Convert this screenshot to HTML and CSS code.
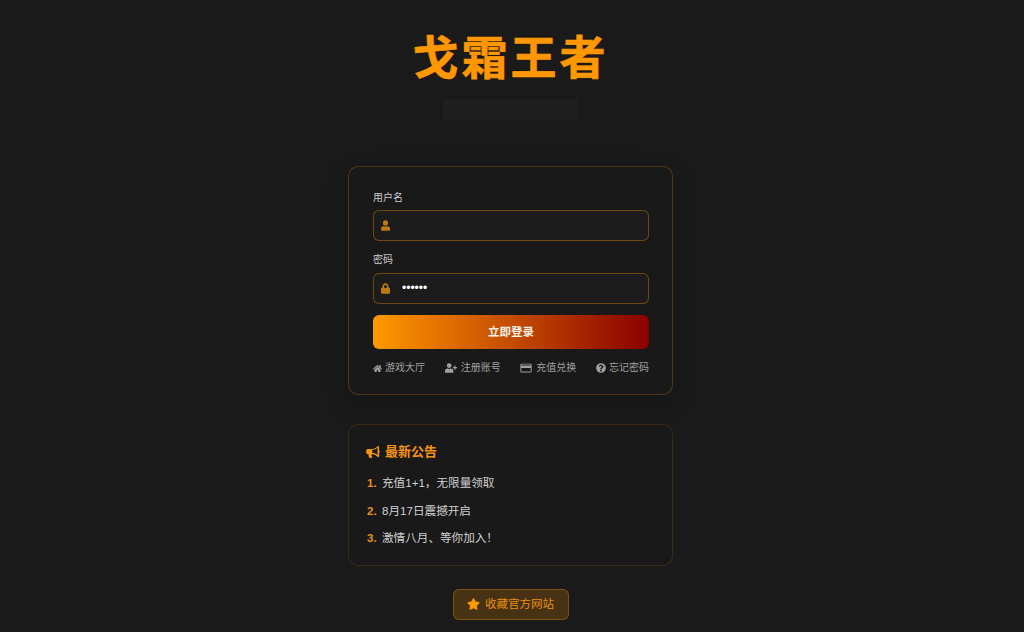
FILE: index.html
```html
<!DOCTYPE html>
<html lang="zh-CN">
<head>
<meta charset="utf-8">
<title>戈霜王者</title>
<link rel="stylesheet" href="styles.css">
</head>
<body>
<main class="page">
  <header class="header">
    <h1 class="title">戈霜王者</h1>
    <div class="subtitle"></div>
  </header>

  <form class="card login">
    <div class="label">用户名</div>
    <div class="field">
      <svg class="field-icon" viewBox="0 0 448 512"><path d="M224 256a128 128 0 1 0 0-256 128 128 0 0 0 0 256zm90 32h-17a174 174 0 0 1-146 0h-17A134 134 0 0 0 0 422v42a48 48 0 0 0 48 48h352a48 48 0 0 0 48-48v-42a134 134 0 0 0-134-134z"/></svg>
    </div>
    <div class="label label-second">密码</div>
    <div class="field">
      <svg class="field-icon" viewBox="0 0 448 512"><path d="M400 224h-24v-72C376 68 308 0 224 0S72 68 72 152v72H48a48 48 0 0 0-48 48v192a48 48 0 0 0 48 48h352a48 48 0 0 0 48-48V272a48 48 0 0 0-48-48zm-104 0H152v-72a72 72 0 0 1 144 0v72z"/></svg>
      <span class="dots">••••••</span>
    </div>
    <button class="submit" type="button">立即登录</button>
    <nav class="links">
      <a class="link"><svg class="link-icon" viewBox="0 0 576 512"><path d="M280 148 96 300v164a16 16 0 0 0 16 16l112-.3a16 16 0 0 0 16-16V368a16 16 0 0 1 16-16h64a16 16 0 0 1 16 16v96a16 16 0 0 0 16 16l112 .3a16 16 0 0 0 16-16V300L296 148a12 12 0 0 0-16 0zm291 103-83-69V44a12 12 0 0 0-12-12h-56a12 12 0 0 0-12 12v72l-90-74a48 48 0 0 0-61 0L5 251a12 12 0 0 0-2 17l26 31a12 12 0 0 0 17 2L280 107a12 12 0 0 1 16 0l234 194a12 12 0 0 0 17-2l26-31a12 12 0 0 0-2-17z"/></svg>游戏大厅</a>
      <a class="link"><svg class="link-icon wide" viewBox="0 0 640 512"><path d="M624 208h-64v-64a16 16 0 0 0-16-16h-32a16 16 0 0 0-16 16v64h-64a16 16 0 0 0-16 16v32a16 16 0 0 0 16 16h64v64a16 16 0 0 0 16 16h32a16 16 0 0 0 16-16v-64h64a16 16 0 0 0 16-16v-32a16 16 0 0 0-16-16zM224 256a128 128 0 1 0 0-256 128 128 0 0 0 0 256zm90 32h-17a174 174 0 0 1-146 0h-17A134 134 0 0 0 0 422v42a48 48 0 0 0 48 48h352a48 48 0 0 0 48-48v-42a134 134 0 0 0-134-134z"/></svg>注册账号</a>
      <a class="link"><svg class="link-icon wide" viewBox="0 0 576 512"><path d="M528 32H48A48 48 0 0 0 0 80v352a48 48 0 0 0 48 48h480a48 48 0 0 0 48-48V80a48 48 0 0 0-48-48zM54 80h468a6 6 0 0 1 6 6v42H48V86a6 6 0 0 1 6-6zm468 352H54a6 6 0 0 1-6-6V256h480v170a6 6 0 0 1-6 6z"/></svg>充值兑换</a>
      <a class="link"><svg class="link-icon round" viewBox="0 0 512 512"><path d="M504 256a248 248 0 1 1-496 0 248 248 0 0 1 496 0zM263 90c-54 0-89 23-116 63a12 12 0 0 0 3 16l35 26a12 12 0 0 0 16-2c18-23 31-36 58-36 21 0 47 13 47 34 0 15-13 23-34 35-24 14-56 31-56 73v4a12 12 0 0 0 12 12h56a12 12 0 0 0 12-12v-1c0-29 85-30 85-109 0-60-62-103-118-103zm-7 254a47 47 0 1 0 0 94 47 47 0 0 0 0-94z"/></svg>忘记密码</a>
    </nav>
  </form>

  <section class="card notice">
    <h2 class="notice-title"><svg class="notice-icon" viewBox="0 0 576 512"><path d="M576 240c0-24-13-44-32-55V32c0-9-7-32-32-32-7 0-14 2-20 7l-85 68c-43 34-96 53-151 53H64a64 64 0 0 0-64 64v96a64 64 0 0 0 64 64h34a243 243 0 0 0-2 32c0 40 9 77 26 110 5 11 17 18 29 18h74c26 0 42-30 26-51-16-22-26-49-26-77 0-10 1-20 4-32h31c55 0 108 19 151 53l85 68c6 5 13 7 20 7 25 0 32-23 32-32V295c19-11 32-31 32-55zm-96 141-33-26a304 304 0 0 0-191-67V160c70 0 138-24 191-67l33-26z"/></svg>最新公告</h2>
    <ol class="notice-list">
      <li class="notice-item"><span class="num">1.</span>充值1+1，无限量领取</li>
      <li class="notice-item"><span class="num">2.</span>8月17日震撼开启</li>
      <li class="notice-item"><span class="num">3.</span>激情八月、等你加入！</li>
    </ol>
  </section>

  <a class="favorite"><svg class="fav-icon" viewBox="0 0 576 512"><path d="M259 18 194 150 47 171c-26 4-37 36-18 55l106 103-25 146c-5 26 23 46 46 34l131-69 131 69c23 12 51-8 46-34l-25-146 106-103c19-19 8-51-18-55l-147-21-65-132c-12-24-46-24-58 0z"/></svg>收藏官方网站</a>
</main>
</body>
</html>
```

FILE: styles.css
```css
* { box-sizing: border-box; }

html, body {
  margin: 0;
  height: 632px;
  overflow: hidden;
  background: #1a1a1a;
}

body {
  font-family: "Liberation Sans", "Noto Sans CJK SC", sans-serif;
  color: #ccc;
}

.page {
  width: 325px;
  margin-left: 348px;
  padding-top: 33px;
  display: flex;
  flex-direction: column;
  align-items: stretch;
}

.header {
  display: flex;
  flex-direction: column;
  align-items: center;
}

.title {
  margin: 0;
  height: 48px;
  font-size: 46px;
  line-height: 50px;
  letter-spacing: 3px;
  font-weight: 700;
  color: #ff9800;
  -webkit-text-stroke: 0.6px #ff9800;
}

.subtitle {
  width: 135px;
  height: 21px;
  margin-top: 18px;
  background: #1f1f1f;
}

.card {
  border: 1px solid rgba(255, 152, 0, 0.24);
  border-radius: 10px;
  background: #191919;
}

.login {
  margin-top: 46px;
  height: 229px;
  padding: 24px 23px 0 24px;
  box-shadow: 0 8px 24px rgba(0, 0, 0, 0.2);
}

.label {
  font-size: 10px;
  line-height: 14px;
  margin-bottom: 5px;
  color: #ccc;
}

.label-second {
  margin-top: 12px;
  margin-bottom: 6px;
}

.field {
  height: 31px;
  border: 1px solid rgba(255, 152, 0, 0.36);
  border-radius: 6px;
  background: #1c1c1c;
  display: flex;
  align-items: center;
  padding-left: 7px;
}

.field-icon {
  width: 9px;
  height: 11px;
  fill: #bf7a14;
  flex: none;
}

.dots {
  margin-left: 12px;
  padding-bottom: 2px;
  font-family: "Liberation Sans", sans-serif;
  font-size: 12px;
  color: #fff;
}

.submit {
  display: block;
  width: 100%;
  height: 34px;
  margin-top: 11px;
  padding: 0 0 3px;
  border: 0;
  border-radius: 6px;
  background: linear-gradient(90deg, #ff9800, #8b0000);
  color: #f4f0ea;
  font: 700 11.5px "Liberation Sans", "Noto Sans CJK SC", sans-serif;
}

.links {
  display: flex;
  justify-content: space-between;
  margin-top: 12px;
}

.link {
  display: flex;
  align-items: center;
  gap: 3px;
  font-size: 10px;
  line-height: 14px;
  color: #a0a0a0;
}

.link-icon {
  width: 9px;
  height: 9px;
  fill: #a0a0a0;
  flex: none;
}

.link-icon.wide {
  width: 12px;
  height: 10px;
  margin-right: 1px;
}

.link-icon.round {
  width: 10px;
  height: 10px;
}

.notice {
  margin-top: 29px;
  height: 142px;
  padding: 18px 17px 0;
  border-color: rgba(255, 152, 0, 0.14);
}

.notice-title {
  display: flex;
  align-items: center;
  gap: 5px;
  margin: 0;
  font-size: 13px;
  line-height: 18px;
  font-weight: 700;
  color: #f59412;
}

.notice-icon {
  width: 14px;
  height: 12px;
  fill: #f59412;
}

.notice-list {
  list-style: none;
  margin: 13px 0 0;
  padding: 0;
  display: flex;
  flex-direction: column;
  gap: 10.5px;
}

.notice-item {
  display: flex;
  font-size: 11.6px;
  line-height: 17px;
  color: #d0d0d0;
}

.num {
  width: 16px;
  height: 17px;
  padding: 1px 0 0 1px;
  line-height: 16px;
  font-weight: 700;
  font-size: 11.5px;
  color: #e88f14;
}

.favorite {
  align-self: center;
  margin-top: 23px;
  width: 116px;
  height: 31px;
  display: flex;
  align-items: center;
  justify-content: center;
  gap: 5px;
  border: 1px solid rgba(255, 152, 0, 0.3);
  border-radius: 6px;
  background: rgba(255, 152, 0, 0.2);
  font-size: 11.5px;
  line-height: 29px;
  color: #ec8f10;
}

.fav-icon {
  width: 13px;
  height: 12px;
  margin-bottom: 2px;
  fill: #ff9800;
}
```
